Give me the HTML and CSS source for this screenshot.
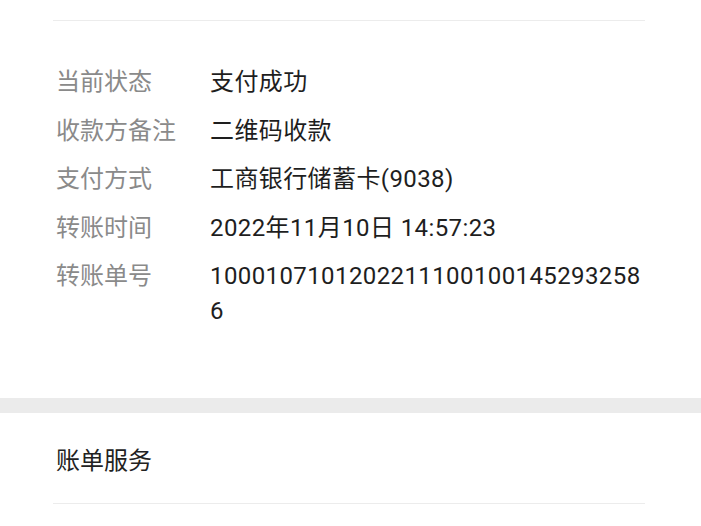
FILE: index.html
```html
<!DOCTYPE html>
<html lang="zh-CN">
<head>
    <meta charset="UTF-8">
    <meta name="viewport" content="width=device-width, initial-scale=1.0">
    <title>账单详情</title>
    <link rel="stylesheet" href="styles.css">
</head>
<body>
    <!-- Transfer details -->
    <div class="section detail">
        <div class="divider"></div>
        <div class="rows">
            <div class="row">
                <span class="label">当前状态</span>
                <span class="value">支付成功</span>
            </div>
            <div class="row">
                <span class="label">收款方备注</span>
                <span class="value">二维码收款</span>
            </div>
            <div class="row">
                <span class="label">支付方式</span>
                <span class="value">工商银行储蓄卡(9038)</span>
            </div>
            <div class="row">
                <span class="label">转账时间</span>
                <span class="value">2022年11月10日 14:57:23</span>
            </div>
            <div class="row">
                <span class="label">转账单号</span>
                <span class="value number">10001071012022111001001452932586</span>
            </div>
        </div>
    </div>

    <div class="gap"></div>

    <!-- Bill service -->
    <div class="section service">
        <div class="title">账单服务</div>
        <div class="divider"></div>
    </div>
</body>
</html>
```

FILE: styles.css
```css
body {
    margin: 0;
    background: #fff;
    font-family: Roboto, "Noto Sans CJK SC", sans-serif;
    font-size: 24px;
    line-height: 35px;
    color: #1e1e1e;
}
.section {
    background: #fff;
}
.divider {
    height: 1px;
    background: #ececec;
    margin: 0 56px 0 53px;
}
.detail {
    padding-top: 20px;
    padding-bottom: 69px;
}
.rows {
    padding: 44px 56px 0 56px;
}
.row {
    display: grid;
    grid-template-columns: 154px 1fr;
    margin-bottom: 13.5px;
}
.row:last-child {
    margin-bottom: 0;
}
.label {
    color: #8a8a8a;
}
.value {
    letter-spacing: 0.4px;
}
.number {
    word-break: break-all;
}
.gap {
    height: 15px;
    background: #ebebeb;
}
.service {
    padding-top: 31px;
}
.title {
    padding-left: 56px;
    margin-bottom: 24px;
    color: #222;
}
```
